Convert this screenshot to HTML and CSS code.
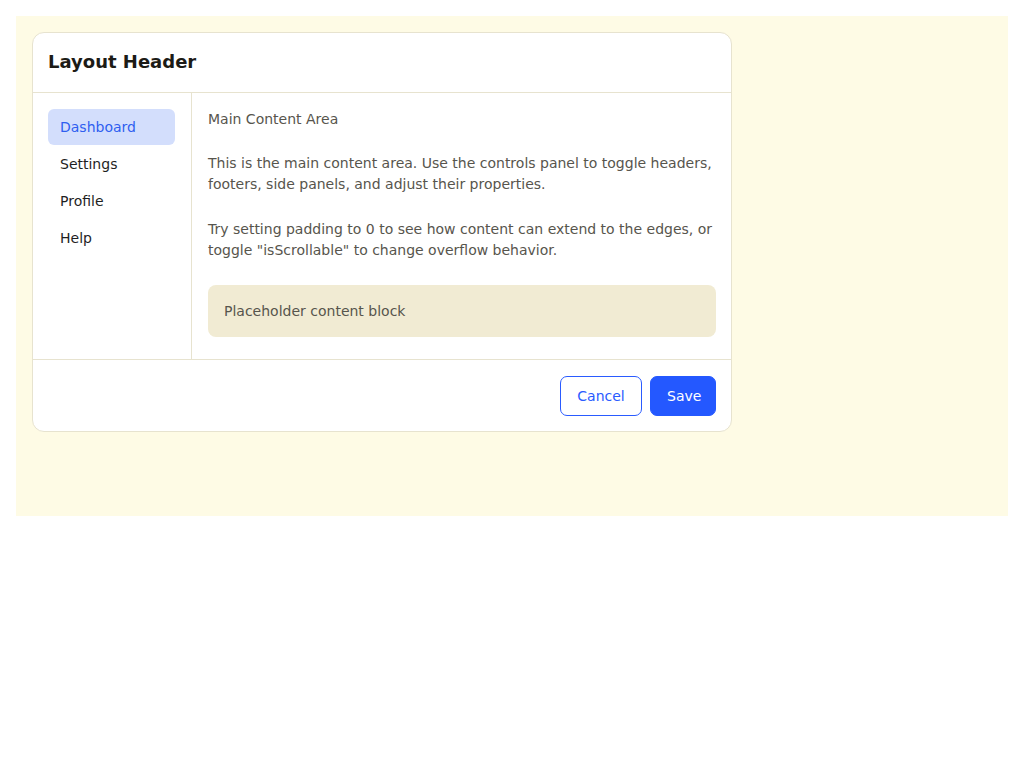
FILE: index.html
```html
<!DOCTYPE html>
<html>
<head>
<meta charset="utf-8">
<link rel="stylesheet" href="styles.css">
</head>
<body>
<div class="stage">
  <div class="card">
    <header class="card-header">
      <h1 class="title">Layout Header</h1>
    </header>
    <div class="card-body">
      <nav class="sidebar">
        <a class="nav-item active">Dashboard</a>
        <a class="nav-item">Settings</a>
        <a class="nav-item">Profile</a>
        <a class="nav-item">Help</a>
      </nav>
      <main class="main">
        <p class="lead">Main Content Area</p>
        <p class="para first">This is the main content area. Use the controls panel to toggle headers, footers, side panels, and adjust their properties.</p>
        <p class="para second">Try setting padding to 0 to see how content can extend to the edges, or toggle "isScrollable" to change overflow behavior.</p>
        <div class="placeholder">Placeholder content block</div>
      </main>
    </div>
    <footer class="card-footer">
      <button class="btn btn-outline">Cancel</button>
      <button class="btn btn-primary">Save</button>
    </footer>
  </div>
</div>
</body>
</html>
```
FILE: styles.css
```css
html, body {
  margin: 0;
  padding: 0;
  background: #ffffff;
}
body {
  padding: 16px;
  font-family: "DejaVu Sans", "Liberation Sans", sans-serif;
  font-size: 14px;
  color: #222;
}
.stage {
  background: #fefbe5;
  height: 500px;
  padding: 16px;
  box-sizing: border-box;
}
.card {
  width: 700px;
  height: 400px;
  box-sizing: border-box;
  background: #ffffff;
  border: 1px solid #e7e3cf;
  border-radius: 12px;
  display: flex;
  flex-direction: column;
  overflow: hidden;
}
.card-header {
  height: 60px;
  box-sizing: border-box;
  padding: 0 15px 3px;
  display: flex;
  align-items: center;
  border-bottom: 1px solid #e7e3cf;
  flex: none;
}
.title {
  margin: 0;
  font-size: 18px;
  font-weight: bold;
  color: #1c1b16;
}
.card-body {
  flex: 1;
  display: flex;
  min-height: 0;
}
.sidebar {
  width: 159px;
  box-sizing: border-box;
  border-right: 1px solid #e7e3cf;
  padding: 16px 16px 16px 15px;
  display: flex;
  flex-direction: column;
  gap: 1px;
}
.nav-item {
  display: block;
  height: 36px;
  line-height: 36px;
  padding: 0 12px;
  border-radius: 6px;
  color: #1f1f1f;
}
.nav-item.active {
  background: #d3defc;
  color: #2f5ef0;
}
.main {
  flex: 1;
  padding: 16px 15px 16px 16px;
  color: #57554d;
}
.main p {
  margin: 0;
  line-height: 21px;
}
.para.first {
  margin-top: 23px;
}
.para.second {
  margin-top: 24px;
}
.placeholder {
  margin-top: 24px;
  background: #f1ebd3;
  border-radius: 8px;
  height: 52px;
  box-sizing: border-box;
  padding: 0 16px;
  display: flex;
  align-items: center;
  color: #57554d;
}
.card-footer {
  height: 72px;
  box-sizing: border-box;
  border-top: 1px solid #e7e3cf;
  padding: 0 15px;
  display: flex;
  align-items: center;
  justify-content: flex-end;
  gap: 8px;
  flex: none;
}
.btn {
  height: 40px;
  border-radius: 7px;
  font-family: "DejaVu Sans", "Liberation Sans", sans-serif;
  font-size: 14px;
  padding: 0 16px;
  box-sizing: border-box;
}
.btn-outline {
  width: 82px;
  background: #ffffff;
  border: 1px solid #2a5bff;
  color: #2a5bff;
}
.btn-primary {
  width: 66px;
  background: #2458ff;
  border: 1px solid #2458ff;
  color: #ffffff;
}
```
